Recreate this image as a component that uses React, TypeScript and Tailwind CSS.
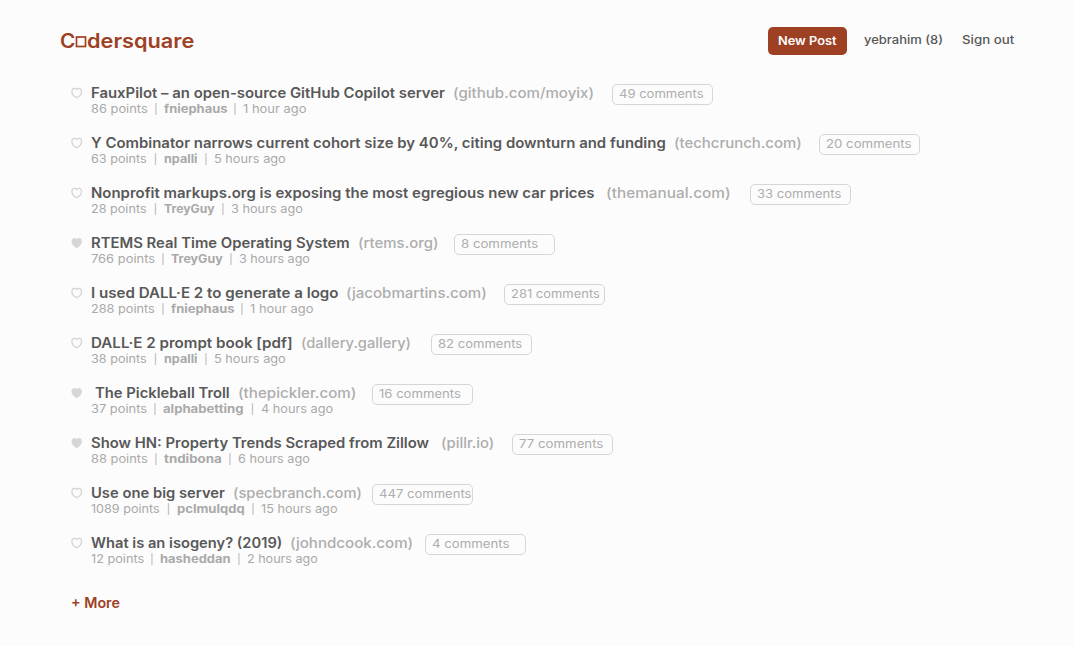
import { useLayoutEffect, useRef, useState } from "react";
import clsx from "clsx";

/** A single line of text, widened or narrowed to fill the given width. */
function Fit({ text, width, className }: { text: string; width: number; className?: string }) {
  const ref = useRef<HTMLSpanElement>(null);
  const [scale, setScale] = useState(1);
  useLayoutEffect(() => {
    const natural = ref.current?.offsetWidth;
    if (natural) setScale(width / natural);
  }, [text, width]);
  return (
    <span className={clsx("block shrink-0 whitespace-pre text-left", className)} style={{ width }}>
      <span ref={ref} className="inline-block origin-left" style={{ transform: `scaleX(${scale})` }}>
        {text}
      </span>
    </span>
  );
}

type Span = [start: number, end: number];

interface Post {
  title: string;
  titleAt: Span;
  site: string;
  siteAt: Span;
  comments: string;
  boxAt: number;
  commentsWidth: number;
  points: string;
  pointsEnd: number;
  author: string;
  authorAt: Span;
  time: string;
  timeAt: Span;
  liked?: boolean;
}

const posts: Post[] = [
  { title: "FauxPilot – an open-source GitHub Copilot server", titleAt: [91, 445], site: "(github.com/moyix)", siteAt: [453, 594], comments: "49 comments", boxAt: 612, commentsWidth: 85, points: "86 points", pointsEnd: 148, author: "fniephaus", authorAt: [164, 227], time: "1 hour ago", timeAt: [243, 306] },
  { title: "Y Combinator narrows current cohort size by 40%, citing downturn and funding", titleAt: [91, 666], site: "(techcrunch.com)", siteAt: [674, 802], comments: "20 comments", boxAt: 819, commentsWidth: 85, points: "63 points", pointsEnd: 147, author: "npalli", authorAt: [164, 198], time: "5 hours ago", timeAt: [214, 286] },
  { title: "Nonprofit markups.org is exposing the most egregious new car prices", titleAt: [91, 595], site: "(themanual.com)", siteAt: [606, 731], comments: "33 comments", boxAt: 750, commentsWidth: 84, points: "28 points", pointsEnd: 147, author: "TreyGuy", authorAt: [164, 215], time: "3 hours ago", timeAt: [231, 303] },
  { title: "RTEMS Real Time Operating System", titleAt: [91, 350], site: "(rtems.org)", siteAt: [358, 438], comments: "8 comments", boxAt: 454, commentsWidth: 77, points: "766 points", pointsEnd: 155, author: "TreyGuy", authorAt: [171, 223], time: "3 hours ago", timeAt: [239, 310], liked: true },
  { title: "I used DALL·E 2 to generate a logo", titleAt: [91, 338], site: "(jacobmartins.com)", siteAt: [346, 487], comments: "281 comments", boxAt: 504, commentsWidth: 89, points: "288 points", pointsEnd: 155, author: "fniephaus", authorAt: [171, 234], time: "1 hour ago", timeAt: [250, 313] },
  { title: "DALL·E 2 prompt book [pdf]", titleAt: [91, 293], site: "(dallery.gallery)", siteAt: [301, 411], comments: "82 comments", boxAt: 431, commentsWidth: 84, points: "38 points", pointsEnd: 147, author: "npalli", authorAt: [164, 198], time: "5 hours ago", timeAt: [214, 286] },
  { title: "The Pickleball Troll", titleAt: [95, 230], site: "(thepickler.com)", siteAt: [238, 356], comments: "16 comments", boxAt: 372, commentsWidth: 82, points: "37 points", pointsEnd: 147, author: "alphabetting", authorAt: [163, 244], time: "4 hours ago", timeAt: [261, 333], liked: true },
  { title: "Show HN: Property Trends Scraped from Zillow", titleAt: [91, 429], site: "(pillr.io)", siteAt: [441, 494], comments: "77 comments", boxAt: 512, commentsWidth: 84, points: "88 points", pointsEnd: 148, author: "tndibona", authorAt: [164, 222], time: "6 hours ago", timeAt: [238, 310], liked: true },
  { title: "Use one big server", titleAt: [91, 225], site: "(specbranch.com)", siteAt: [233, 362], comments: "447 comments", boxAt: 372, commentsWidth: 92, points: "1089 points", pointsEnd: 160, author: "pclmulqdq", authorAt: [177, 245], time: "15 hours ago", timeAt: [261, 337] },
  { title: "What is an isogeny? (2019)", titleAt: [91, 282], site: "(johndcook.com)", siteAt: [290, 413], comments: "4 comments", boxAt: 425, commentsWidth: 78, points: "12 points", pointsEnd: 144, author: "hasheddan", authorAt: [160, 231], time: "2 hours ago", timeAt: [247, 318] },
];

function Heart({ filled }: { filled?: boolean }) {
  return (
    <svg width="12" height="12" viewBox="0 0 12 12" className="shrink-0">
      <path
        d="M5.7 10.6C3.6 9.8.9 7.6.9 4.3.9 2.6 1.9 1.4 3.4 1.4c1 0 1.8.4 2.3 1.1.5-.7 1.3-1.1 2.3-1.1 1.5 0 2.5 1.2 2.5 2.9 0 3.3-2.7 5.5-4.8 6.3Z"
        fill={filled ? "#d6d6d6" : "none"}
        stroke="#d6d6d6"
        strokeWidth={filled ? 0.9 : 1.3}
        strokeLinejoin="round"
      />
    </svg>
  );
}

function Separator({ width }: { width: number }) {
  return (
    <span className="shrink-0 text-center text-[10px]" style={{ width }}>
      |
    </span>
  );
}

function PostRow({ post }: { post: Post }) {
  const { titleAt, siteAt, authorAt, timeAt } = post;
  return (
    <li className="flex h-[50px] items-start">
      <div className="flex h-[18px] w-5 shrink-0 items-center">
        <Heart filled={post.liked} />
      </div>
      <div className="flex flex-col">
        <div className="flex h-[21px] items-start text-[14px] leading-[18px]">
          <h2 className="font-[560] text-[#585858]" style={{ marginLeft: titleAt[0] - 91 }}>
            <Fit text={post.title} width={titleAt[1] - titleAt[0]} />
          </h2>
          <a className="font-medium text-[#adadad]" style={{ marginLeft: siteAt[0] - titleAt[1] }}>
            <Fit text={post.site} width={siteAt[1] - siteAt[0]} />
          </a>
          <a
            className="flex h-[21px] w-[101px] items-center rounded-[5px] border border-[#d6d6d6] pb-px pl-1.5 text-[11.5px] text-[#adadad]"
            style={{ marginLeft: post.boxAt - siteAt[1] }}
          >
            <Fit text={post.comments} width={post.commentsWidth} />
          </a>
        </div>
        <div className="-mt-1 flex h-4 text-[11.5px] leading-4 text-[#a9a9a9]">
          <Fit text={post.points} width={post.pointsEnd - 91} />
          <Separator width={authorAt[0] - post.pointsEnd} />
          <Fit text={post.author} width={authorAt[1] - authorAt[0]} className="font-bold" />
          <Separator width={timeAt[0] - authorAt[1]} />
          <Fit text={post.time} width={timeAt[1] - timeAt[0]} />
        </div>
      </div>
    </li>
  );
}

export default function App() {
  return (
    <div className="h-[646px] w-[1075px] overflow-hidden bg-[#fcfcfc] font-['Inter',sans-serif]">
      <header className="flex h-[84px] items-start justify-between pt-[27px] pr-[61px] pl-[60px]">
        <div className="flex h-7 items-center pt-0.5 text-[19.5px] font-[560] text-[#9d4024]">
          <Fit text="C" width={15} />
          <svg width="12" height="12" viewBox="0 0 12 12">
            <rect x="1.5" y="1" width="9" height="9.5" fill="none" stroke="#9d4024" strokeWidth="1.7" />
          </svg>
          <Fit text="dersquare" width={107} />
        </div>
        <nav className="flex h-7 items-center text-[11.5px] font-medium text-[#575757]">
          <button className="flex h-7 w-[79px] items-center rounded-[5px] bg-[#9d4024] pt-px pl-2.5 font-[560] text-white">
            <Fit text="New Post" width={59} />
          </button>
          <a className="ml-[17px]">
            <Fit text="yebrahim (8)" width={79} />
          </a>
          <a className="ml-[19px]">
            <Fit text="Sign out" width={52} />
          </a>
        </nav>
      </header>
      <ul className="pl-[71px]">
        {posts.map((post) => (
          <PostRow key={post.title} post={post} />
        ))}
      </ul>
      <a className="flex h-9 items-center pl-[71px] text-[14px] font-[560] text-[#9d4024]">
        <Fit text="+ More" width={49} />
      </a>
    </div>
  );
}
